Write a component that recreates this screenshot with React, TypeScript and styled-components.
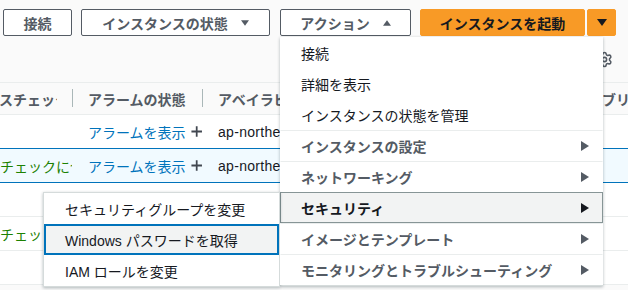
import React from "react";
import styled, { createGlobalStyle } from "styled-components";
import { Settings } from "lucide-react";

const GlobalStyle = createGlobalStyle`
  html, body {
    margin: 0;
    padding: 0;
  }
  body {
    background: #fafafa;
    color: #16191f;
    font-family: "Liberation Sans", "Noto Sans CJK JP", sans-serif;
    font-size: 14px;
  }
`;

const Page = styled.div`
  background: #fafafa;
  height: 290px;
  overflow: hidden;
  position: relative;
  width: 628px;
`;

const Toolbar = styled.div`
  align-items: flex-start;
  display: flex;
  gap: 9px;
  padding: 9px 0 0 3px;
`;

const Button = styled.button<{ $w: number; $primary?: boolean }>`
  align-items: center;
  background: ${(p) => (p.$primary ? "#f89a26" : "#ffffff")};
  border: 1px solid ${(p) => (p.$primary ? "#f89a26" : "#545b64")};
  border-radius: 2px;
  box-sizing: border-box;
  color: ${(p) => (p.$primary ? "#16191f" : "#545b64")};
  display: flex;
  font-family: inherit;
  font-size: 14px;
  font-weight: 700;
  gap: 13px;
  height: 27px;
  justify-content: center;
  padding: 0;
  width: ${(p) => p.$w}px;
`;

const ActionsWrap = styled.div`
  margin-left: 1px;
  position: relative;
`;

const SplitGroup = styled.div`
  display: flex;
  gap: 2px;
`;

const GearRow = styled.div`
  align-items: center;
  color: #545b64;
  display: flex;
  height: 46px;
  justify-content: flex-end;
  padding-right: 15px;
`;

const Table = styled.div`
  border-top: 1px solid #eaeded;
`;

const HeaderRow = styled.div`
  border-bottom: 1px solid #eaeded;
  display: flex;
  height: 31px;
`;

const Row = styled.div<{ $selected?: boolean }>`
  background: ${(p) => (p.$selected ? "#f1faff" : "#ffffff")};
  border-bottom: 1px solid ${(p) => (p.$selected ? "#0073bb" : "#eaeded")};
  border-top: ${(p) => (p.$selected ? "1px solid #0073bb" : "none")};
  display: flex;
  height: 33px;
  margin-top: ${(p) => (p.$selected ? "-1px" : "0")};
`;

const Cell = styled.div<{ $w?: number; $divider?: boolean; $head?: boolean }>`
  align-items: center;
  box-sizing: border-box;
  color: ${(p) => (p.$head ? "#545b64" : "#16191f")};
  display: flex;
  flex: ${(p) => (p.$w ? `0 0 ${p.$w}px` : "1 1 auto")};
  font-weight: ${(p) => (p.$head ? 700 : 400)};
  overflow: hidden;
  padding-left: 16px;
  position: relative;
  white-space: nowrap;

  &::before {
    background: #aab7b8;
    content: "";
    display: ${(p) => (p.$divider ? "block" : "none")};
    height: 18px;
    left: 0;
    position: absolute;
    top: 6px;
    width: 1px;
  }
`;

const ClipCell = styled.div<{ $head?: boolean }>`
  align-items: center;
  color: ${(p) => (p.$head ? "#545b64" : "#1d8102")};
  display: flex;
  flex: 0 0 ${(p) => (p.$head ? 57 : 72)}px;
  font-weight: ${(p) => (p.$head ? 700 : 400)};
  margin-right: ${(p) => (p.$head ? 15 : 0)}px;
  overflow: hidden;
  white-space: nowrap;
`;

const Shifted = styled.span<{ $shift: number }>`
  margin-left: ${(p) => p.$shift}px;
`;

const Link = styled.span`
  color: #0073bb;
`;

const Zone = styled.span`
  letter-spacing: 0.3px;
`;

const PlusIcon = styled.svg`
  margin-left: 5px;
`;

const Menu = styled.div`
  background: #ffffff;
  border: 1px solid #d5dbdb;
  border-top: none;
  box-shadow: 0 1px 3px rgba(0, 28, 36, 0.3);
  box-sizing: border-box;
  left: 0;
  position: absolute;
  top: 28px;
  width: 323px;
  z-index: 10;
`;

const MenuItem = styled.div<{ $group?: boolean; $active?: boolean }>`
  align-items: center;
  background: ${(p) => (p.$active ? "#f2f3f3" : "#ffffff")};
  border: 1px solid ${(p) => (p.$active ? "#879596" : "transparent")};
  border-top-color: ${(p) =>
    p.$active ? "#879596" : p.$group ? "#eaeded" : "transparent"};
  box-sizing: border-box;
  color: ${(p) => (p.$active ? "#16191f" : p.$group ? "#545b64" : "#16191f")};
  display: flex;
  font-weight: ${(p) => (p.$group ? 700 : 400)};
  height: 31px;
  justify-content: space-between;
  margin: 0 -1px;
  padding: 0 13px 0 20px;
  position: relative;
  white-space: nowrap;
`;

const SubMenu = styled.div`
  background: #ffffff;
  border: 1px solid #d5dbdb;
  box-shadow: 0 1px 3px rgba(0, 28, 36, 0.3);
  box-sizing: border-box;
  position: absolute;
  right: calc(100% + 1px);
  top: -1px;
  width: 237px;
`;

const SubItem = styled.div<{ $focused?: boolean }>`
  align-items: center;
  background: ${(p) => (p.$focused ? "#f2f3f3" : "#ffffff")};
  border: 2px solid ${(p) => (p.$focused ? "#0073bb" : "transparent")};
  box-sizing: border-box;
  color: #16191f;
  display: flex;
  font-weight: 400;
  height: 31px;
  padding-left: 19px;
`;

const Caret = ({
  dir,
  size = 8,
  color,
}: {
  dir: "up" | "down" | "right";
  size?: number;
  color: string;
}) => {
  const pts =
    dir === "down" ? "0,0 10,0 5,7" : dir === "up" ? "0,7 10,7 5,0" : "0,0 8,5 0,10";
  const vb = dir === "right" ? "0 0 8 10" : "0 0 10 7";
  const w = dir === "right" ? 8 : size;
  const h = dir === "right" ? 10 : Math.round(size * 0.7);
  return (
    <svg width={w} height={h} viewBox={vb}>
      <polygon points={pts} fill={color} />
    </svg>
  );
};

const actionItems = [
  { label: "接続" },
  { label: "詳細を表示" },
  { label: "インスタンスの状態を管理" },
  { label: "インスタンスの設定", group: true },
  { label: "ネットワーキング", group: true },
  { label: "セキュリティ", group: true, active: true },
  { label: "イメージとテンプレート", group: true },
  { label: "モニタリングとトラブルシューティング", group: true },
];

const securityItems = [
  { label: "セキュリティグループを変更" },
  { label: "Windows パスワードを取得", focused: true },
  { label: "IAM ロールを変更" },
];

const Plus = () => (
  <PlusIcon width="13" height="13" viewBox="0 0 13 13">
    <path d="M6.5 0.5v12M0.5 6.5h12" stroke="#414750" strokeWidth="2" />
  </PlusIcon>
);

const rows = [
  { status: "", alarm: true },
  { status: "チェックに合格", alarm: true, selected: true },
  { status: "", alarm: false },
  { status: "チェック", alarm: false },
  { status: "", alarm: false },
];

export default function App() {
  return (
    <Page>
      <GlobalStyle />
      <Toolbar>
        <Button $w={69}>接続</Button>
        <Button $w={189}>
          インスタンスの状態
          <Caret dir="down" color="#545b64" />
        </Button>
        <ActionsWrap>
          <Button $w={131}>
            アクション
            <Caret dir="up" color="#545b64" />
          </Button>
          <Menu>
            {actionItems.map((item) => (
              <MenuItem key={item.label} $group={item.group} $active={item.active}>
                <span>{item.label}</span>
                {item.group && (
                  <Caret dir="right" color={item.active ? "#16191f" : "#545b64"} />
                )}
                {item.active && (
                  <SubMenu>
                    {securityItems.map((s) => (
                      <SubItem key={s.label} $focused={s.focused}>
                        {s.label}
                      </SubItem>
                    ))}
                  </SubMenu>
                )}
              </MenuItem>
            ))}
          </Menu>
        </ActionsWrap>
        <SplitGroup>
          <Button $w={165} $primary>
            インスタンスを起動
          </Button>
          <Button $w={29} $primary>
            <Caret dir="down" size={10} color="#16191f" />
          </Button>
        </SplitGroup>
      </Toolbar>
      <GearRow>
        <Settings size={17} strokeWidth={2.2} />
      </GearRow>
      <Table>
        <HeaderRow>
          <ClipCell $head>
            <Shifted $shift={-1}>スチェック</Shifted>
          </ClipCell>
          <Cell $w={130} $head $divider>
            アラームの状態
          </Cell>
          <Cell $w={370} $head $divider>
            アベイラビリティーゾーン
          </Cell>
          <Cell $head $divider>
            パブリック
          </Cell>
        </HeaderRow>
        {rows.map((r, i) => (
          <Row key={i} $selected={r.selected}>
            <ClipCell>{r.status}</ClipCell>
            <Cell $w={130}>
              {r.alarm && (
                <>
                  <Link>アラームを表示</Link>
                  <Plus />
                </>
              )}
            </Cell>
            <Cell $w={370}>{r.alarm && <Zone>ap-northeast-1a</Zone>}</Cell>
            <Cell />
          </Row>
        ))}
      </Table>
    </Page>
  );
}
